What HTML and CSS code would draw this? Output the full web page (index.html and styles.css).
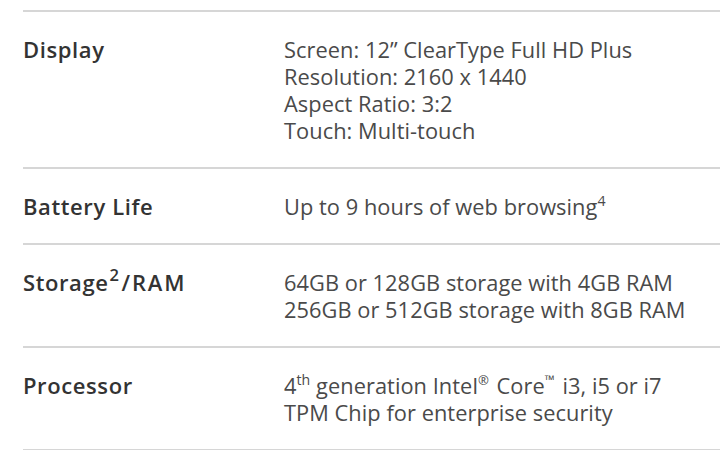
FILE: index.html
```html
<!DOCTYPE html>
<html>
<head>
<meta charset="utf-8">
<link rel="stylesheet" href="styles.css">
</head>
<body>
<div class="specs">
  <div class="row">
    <div class="label">Display</div>
    <div class="value">
      <div>Screen: 12” ClearType Full HD Plus</div>
      <div>Resolution: 2160 x 1440</div>
      <div>Aspect Ratio: 3:2</div>
      <div>Touch: Multi-touch</div>
    </div>
  </div>
  <div class="row">
    <div class="label">Battery Life</div>
    <div class="value">
      <div>Up to 9 hours of web browsing<sup class="sup">4</sup></div>
    </div>
  </div>
  <div class="row">
    <div class="label">Storage<sup class="sup sup-label">2</sup><span class="ram">/RAM</span></div>
    <div class="value">
      <div>64GB or 128GB storage with 4GB RAM</div>
      <div>256GB or 512GB storage with 8GB RAM</div>
    </div>
  </div>
  <div class="row">
    <div class="label">Processor</div>
    <div class="value">
      <div>4<sup class="sup">th</sup> generation Intel<sup class="mark">®</sup> Core<sup class="mark">™</sup> i3, i5 or i7</div>
      <div>TPM Chip for enterprise security</div>
    </div>
  </div>
</div>
</body>
</html>
```

FILE: styles.css
```css
html, body {
  margin: 0;
  padding: 0;
  background: #ffffff;
}
body {
  font-family: "Open Sans", "Noto Sans", sans-serif;
  font-size: 21.8px;
  line-height: 27px;
  color: #4a4a4a;
}
.specs {
  margin-left: 23px;
  padding-top: 10px;
  border-bottom: 2px solid #d6d6d6;
}
.row {
  display: flex;
  border-top: 2px solid #d6d6d6;
  padding: 24px 0 23px;
}
.label {
  width: 261px;
  flex: none;
  font-size: 22px;
  font-weight: 600;
  letter-spacing: 0.6px;
  color: #333333;
}
.value {
  flex: 1;
  letter-spacing: 0.05px;
}
.sup {
  font-size: 0.65em;
  line-height: 0;
  vertical-align: 0;
  position: relative;
  top: -0.62em;
}
.sup-label {
  font-size: 0.75em;
  margin: 0 2px 0 1px;
}
.ram {
  letter-spacing: 1.8px;
}
.mark {
  font-size: 0.6em;
  line-height: 0;
  vertical-align: 0;
  position: relative;
  top: -0.72em;
  margin-right: 0.15em;
}
```
